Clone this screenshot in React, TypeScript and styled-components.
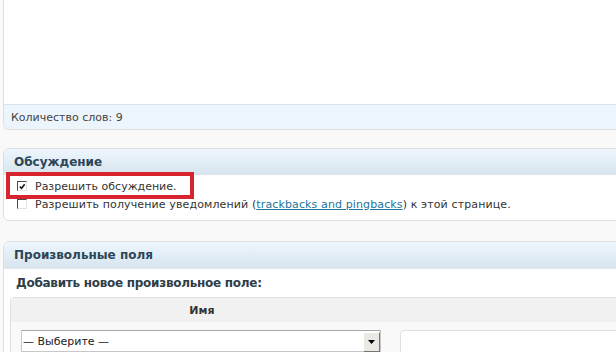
import React from "react";
import styled, { createGlobalStyle } from "styled-components";

const Global = createGlobalStyle`
  html, body { margin: 0; padding: 0; }
  body {
    background: #f9f9f9;
    font-family: "DejaVu Sans", Verdana, sans-serif;
    font-size: 11px;
    color: #333;
    overflow: hidden;
    width: 616px;
    height: 352px;
  }
`;

const Page = styled.div`
  display: flex;
  flex-direction: column;
  padding-left: 3px;
  margin-right: -20px;
`;

const EditorBox = styled.div`
  display: flex;
  flex-direction: column;
  border-left: 1px solid #dfdfdf;
  border-bottom: 1px solid #dfdfdf;
  border-bottom-left-radius: 6px;
  overflow: hidden;
`;

const EditorArea = styled.div`
  height: 104px;
  background: #fff;
`;

const StatusBar = styled.div`
  height: 24px;
  display: flex;
  align-items: center;
  padding-left: 7px;
  border-top: 1px solid #d5e3ee;
  background: #edf5fc;
  color: #444;
`;

const Postbox = styled.div<{ $top: number }>`
  position: relative;
  margin-top: ${(p) => p.$top}px;
  border: 1px solid #dfdfdf;
  border-radius: 6px;
  background: #fff;
`;

const BoxHeader = styled.div<{ $h: number }>`
  height: ${(p) => p.$h}px;
  display: flex;
  align-items: center;
  padding-left: 10px;
  background: linear-gradient(to bottom, #edf6fd 0%, #d8e5ee 100%);
  border-bottom: 1px solid #dfe6eb;
  border-radius: 6px 0 0 0;
  font-weight: bold;
  font-size: 12px;
  color: #2c4657;
`;

const CheckList = styled.div`
  display: flex;
  flex-direction: column;
  padding: 2px 0 7px 13px;
`;

const CheckRow = styled.label<{ $spacing?: number }>`
  height: 18px;
  display: flex;
  align-items: center;
  gap: 8px;
  color: #333;
  letter-spacing: ${(p) => p.$spacing ?? 0}px;
`;

const CheckBox = styled.span`
  width: 10px;
  height: 10px;
  box-sizing: border-box;
  background: #fff;
  border-top: 1px solid #4a4a4a;
  border-left: 1px solid #4a4a4a;
  border-bottom: 1px solid #e4e4e4;
  border-right: 1px solid #e4e4e4;
  display: flex;
  align-items: center;
  justify-content: center;
`;

const Link = styled.a`
  color: #21759b;
  text-decoration: underline;
`;

const Highlight = styled.div`
  position: absolute;
  left: 2px;
  top: 23px;
  width: 188px;
  height: 27px;
  box-sizing: border-box;
  border: 4px solid #d7242f;
  pointer-events: none;
`;

const SubTitle = styled.div`
  height: 28px;
  display: flex;
  align-items: center;
  padding-left: 12px;
  font-weight: bold;
  font-size: 12px;
  letter-spacing: -0.27px;
  color: #2e3e48;
`;

const FieldTable = styled.div`
  margin-left: 6px;
  border: 1px solid #dfdfdf;
  border-radius: 4px 0 0 0;
  background: #f9f9f9;
  display: flex;
  flex-direction: column;
`;

const TableHead = styled.div`
  height: 24px;
  display: grid;
  grid-template-columns: 382px 1fr;
  background: #f1f1f1;
  border-bottom: 1px solid #f9f9f9;
`;

const HeadCell = styled.div`
  display: flex;
  align-items: center;
  justify-content: center;
  font-weight: bold;
  color: #333;
`;

const TableRow = styled.div`
  display: grid;
  grid-template-columns: 389px 1fr;
  padding-top: 7px;
`;

const Cell = styled.div`
  padding-left: 10px;
`;

const Select = styled.div`
  width: 360px;
  height: 22px;
  box-sizing: border-box;
  border: 1px solid #c8c8c8;
  border-top-color: #a6a6a6;
  background: #fff;
  display: flex;
  align-items: center;
  justify-content: space-between;
  padding-left: 1px;
  color: #222;
`;

const DropButton = styled.span`
  width: 17px;
  height: 20px;
  box-sizing: border-box;
  margin-top: 2px;
  background: #ece9e4;
  border-top: 1px solid #fff;
  border-left: 1px solid #fff;
  border-right: 1px solid #777;
  border-bottom: 1px solid #777;
  display: flex;
  align-items: center;
  justify-content: center;
`;

const TextInput = styled.div`
  height: 24px;
  border: 1px solid #dfdfdf;
  border-radius: 4px 0 0 0;
  background: #fff;
`;

export default function App() {
  return (
    <>
      <Global />
      <Page>
        <EditorBox>
          <EditorArea />
          <StatusBar>Количество слов: 9</StatusBar>
        </EditorBox>

        <Postbox $top={18}>
          <BoxHeader $h={25}>Обсуждение</BoxHeader>
          <CheckList>
            <CheckRow>
              <CheckBox>
                <svg width="7" height="7" viewBox="0 0 7 7">
                  <path d="M0.8 3.6 L2.6 5.4 L5.6 1.2" stroke="#111" strokeWidth="1.5" fill="none" />
                </svg>
              </CheckBox>
              Разрешить обсуждение.
            </CheckRow>
            <CheckRow $spacing={0.12}>
              <CheckBox />
              <span>
                Разрешить получение уведомлений (<Link>trackbacks and pingbacks</Link>) к этой странице.
              </span>
            </CheckRow>
          </CheckList>
          <Highlight />
        </Postbox>

        <Postbox $top={20}>
          <BoxHeader $h={26}>Произвольные поля</BoxHeader>
          <SubTitle>Добавить новое произвольное поле:</SubTitle>
          <FieldTable>
            <TableHead>
              <HeadCell>Имя</HeadCell>
              <HeadCell />
            </TableHead>
            <TableRow>
              <Cell>
                <Select>
                  — Выберите —
                  <DropButton>
                    <svg width="7" height="4" viewBox="0 0 7 4">
                      <path d="M0 0 H7 L3.5 4 Z" fill="#000" />
                    </svg>
                  </DropButton>
                </Select>
              </Cell>
              <TextInput />
            </TableRow>
          </FieldTable>
        </Postbox>
      </Page>
    </>
  );
}
